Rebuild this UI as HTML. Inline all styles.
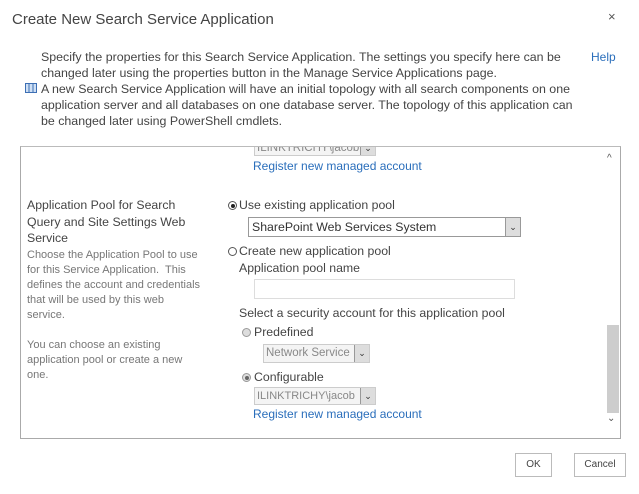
<html><head><style>
body{margin:0;width:639px;height:494px;background:#fff;font-family:"Liberation Sans",sans-serif;position:relative;overflow:hidden;color:#444}
.a{position:absolute;white-space:nowrap}
.t{font-size:12px;line-height:16px;color:#444}
.lnk{color:#2a6ebb;font-size:12px}
.sel{position:absolute;border:1px solid #aaa;background:#fff;font-size:12px;box-sizing:border-box;padding:2px 3px;color:#333;overflow:hidden}
.sel .ar{position:absolute;right:0;top:0;bottom:0;width:14px;background:#ddd;border-left:1px solid #999;font-size:9px;text-align:center;line-height:17px;color:#333}
.dis{background:#f4f4f4;color:#888;border-color:#ccc;font-size:11.5px;padding:2px 2px}
.rad{position:absolute;width:9px;height:9px;border:1px solid #555;border-radius:50%;box-sizing:border-box;background:#fff}
.rad.on::after{content:"";position:absolute;left:1.5px;top:1.5px;width:4px;height:4px;border-radius:50%;background:#222}
.rad.g{border-color:#999;background:#ddd}
.rad.g.on::after{background:#666}
.btn{position:absolute;border:1px solid #bbb;background:#fff;font-size:10px;text-align:center;line-height:22px;color:#444;box-sizing:border-box}
</style></head><body>
<div class="a" style="left:12px;top:11px;font-size:15px;color:#444">Create New Search Service Application</div>
<div class="a" style="left:608px;top:9px;font-size:13px;color:#555">×</div>
<div class="a t" style="left:41px;top:49px;font-size:12.4px">Specify the properties for this Search Service Application. The settings you specify here can be<br>changed later using the properties button in the Manage Service Applications page.<br>A new Search Service Application will have an initial topology with all search components on one<br>application server and all databases on one database server. The topology of this application can<br>be changed later using PowerShell cmdlets.</div>
<div class="a lnk" style="left:591px;top:50px">Help</div>
<svg class="a" style="left:25px;top:83px" width="12" height="10"><rect x="0.5" y="0.5" width="11" height="9" fill="#cfe0f5" stroke="#3d6fb4"/><line x1="4" y1="1" x2="4" y2="9" stroke="#3d6fb4"/><line x1="8" y1="1" x2="8" y2="9" stroke="#3d6fb4"/></svg>
<div class="a" style="left:20px;top:146px;width:601px;height:293px;border:1px solid #aaa;box-sizing:border-box;border-top-color:#bbb;overflow:hidden">
 <div class="sel dis" style="left:233px;top:-8px;width:122px;height:17px">ILINKTRICHY\jacob<span class="ar">⌄</span></div>
 <div class="a lnk" style="left:232px;top:12px">Register new managed account</div>
 <div class="a" style="left:586px;top:6px;font-size:10px;color:#555">^</div>
 <div class="a" style="left:586px;top:178px;width:12px;height:88px;background:#cdcdcd"></div>
 <div class="a" style="left:586px;top:266px;font-size:10px;color:#555">⌄</div>
 <div class="a t" style="left:6px;top:50px;font-size:12.3px;line-height:16.5px;color:#444">Application Pool for Search<br>Query and Site Settings Web<br>Service</div>
 <div class="a" style="left:6px;top:101px;font-size:11px;line-height:15px;color:#777">Choose the Application Pool to use<br>for this Service Application.&nbsp; This<br>defines the account and credentials<br>that will be used by this web<br>service.<br><br>You can choose an existing<br>application pool or create a new<br>one.</div>
 <div class="rad on" style="left:207px;top:54px"></div>
 <div class="a t" style="left:218px;top:50px;font-size:12.3px">Use existing application pool</div>
 <div class="sel" style="left:227px;top:70px;width:273px;height:20px;border-color:#999;font-size:12.3px">SharePoint Web Services System<span class="ar" style="line-height:18px">⌄</span></div>
 <div class="rad" style="left:207px;top:100px"></div>
 <div class="a t" style="left:218px;top:96px;font-size:12.3px">Create new application pool</div>
 <div class="a t" style="left:218px;top:113px;font-size:12.3px">Application pool name</div>
 <div class="a" style="left:233px;top:132px;width:261px;height:20px;border:1px solid #ddd;box-sizing:border-box"></div>
 <div class="a t" style="left:218px;top:158px;font-size:12.3px">Select a security account for this application pool</div>
 <div class="rad g" style="left:221px;top:181px"></div>
 <div class="a t" style="left:233px;top:177px;font-size:12.3px">Predefined</div>
 <div class="sel dis" style="left:242px;top:197px;width:107px;height:19px">Network Service<span class="ar">⌄</span></div>
 <div class="rad g on" style="left:221px;top:226px"></div>
 <div class="a t" style="left:233px;top:222px;font-size:12.3px">Configurable</div>
 <div class="sel dis" style="left:233px;top:240px;width:122px;height:18px;font-size:11px">ILINKTRICHY\jacob<span class="ar">⌄</span></div>
 <div class="a lnk" style="left:232px;top:260px">Register new managed account</div>
</div>
<div class="btn" style="left:515px;top:453px;width:37px;height:24px">OK</div>
<div class="btn" style="left:574px;top:453px;width:52px;height:24px">Cancel</div>
</body></html>
